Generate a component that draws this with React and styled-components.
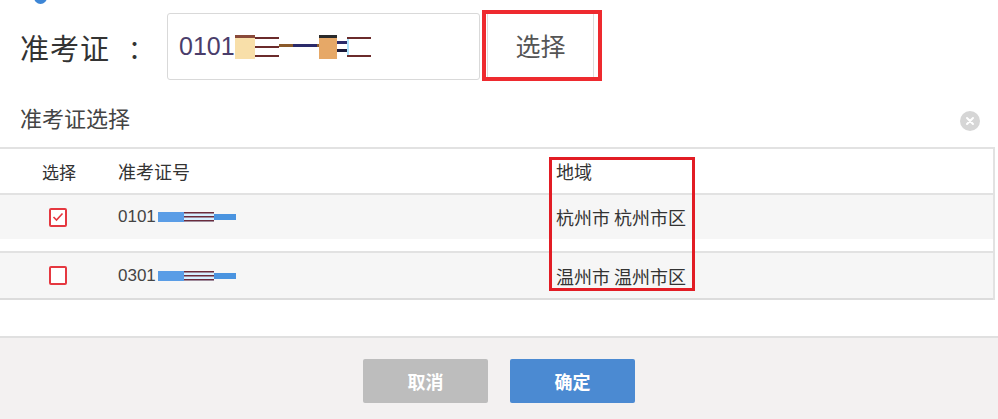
import React from 'react'
import { styled, createGlobalStyle } from 'styled-components'

const Global = createGlobalStyle`
  html, body { margin: 0; padding: 0; background: #fff; }
  body { font-family: "Noto Sans CJK SC", "Liberation Sans", sans-serif; color: #333; }
`

const Page = styled.div`
  width: 998px;
  height: 419px;
  overflow: hidden;
  position: relative;
  background: #fff;
`

const TopIcon = styled.div`
  position: absolute;
  left: 34px;
  top: -9px;
  width: 13px;
  height: 13px;
  border-radius: 50%;
  background: #3d86d6;
`

const FormRow = styled.div`
  display: flex;
  align-items: center;
  height: 92px;
  padding-left: 20px;
  box-sizing: border-box;
  padding-top: 2px;
`

const Label = styled.div`
  font-size: 29px;
  width: 147px;
  color: #333;
  letter-spacing: 1px;
  display: flex;
  align-items: center;
`

const Colon = styled.span`
  margin-left: 18px;
  font-size: 26px;
`

const Input = styled.div`
  width: 313px;
  height: 67px;
  box-sizing: border-box;
  border: 1px solid #d9d9d9;
  border-radius: 3px;
  display: flex;
  align-items: center;
  padding-left: 11px;
  font-family: "Liberation Sans", sans-serif;
  font-size: 25px;
  color: #4a3d6a;
  margin-top: -2px;
`

const RedFrame = styled.div`
  margin-left: 2px;
  border: 4px solid #ee2a2f;
  height: 71px;
  box-sizing: border-box;
  margin-top: -4px;
  display: flex;
`

const SelectBtn = styled.div`
  width: 105px;
  margin: 0 4px 0 1px;
  border-left: 1px solid #ddd;
  border-right: 1px solid #ddd;
  display: flex;
  align-items: center;
  justify-content: center;
  font-size: 25px;
  color: #555;
`

const TitleRow = styled.div`
  display: flex;
  align-items: center;
  justify-content: space-between;
  height: 55px;
  padding: 0 18px 6px 20px;
  box-sizing: border-box;
`

const Title = styled.div`
  font-size: 22px;
  color: #444;
`

const Close = styled.div`
  width: 20px;
  height: 20px;
  border-radius: 50%;
  background: #d6d6d6;
  display: flex;
  align-items: center;
  justify-content: center;
  margin-top: 8px;
`

const Table = styled.div`
  width: 995px;
  border-top: 2px solid #e2e2e2;
  border-right: 2px solid #e2e2e2;
  box-sizing: border-box;
  position: relative;
`

const Row = styled.div`
  display: grid;
  grid-template-columns: 118px 438px 1fr;
  align-items: center;
  height: ${p => p.$h || 44}px;
  background: ${p => (p.$head ? '#fff' : '#f6f6f6')};
  border-top: ${p => (p.$head ? 'none' : '2px solid #e2e2e2')};
  border-bottom: ${p => (p.$last ? '2px solid #dcdcdc' : 'none')};
  margin-top: ${p => p.$gap || 0}px;
  font-size: 17px;
  color: #333;
`

const Cell = styled.div`
  display: flex;
  align-items: center;
  justify-content: ${p => (p.$center ? 'center' : 'flex-start')};
  white-space: nowrap;
  font-size: ${p => p.$fs || 17}px;
`

const Num = styled.span`
  font-family: "Liberation Sans", sans-serif;
  font-size: 17px;
  color: #444;
  margin-right: 2px;
`

const Box = styled.div`
  width: 14px;
  height: 15px;
  border: 2px solid #e53840;
  border-radius: 2px;
  background: #fff;
  display: flex;
  align-items: center;
  justify-content: center;
  margin-left: -2px;
`

const Annot = styled.div`
  position: absolute;
  left: 549px;
  top: 8px;
  width: 146px;
  height: 134px;
  border: 3px solid #e21c24;
  box-sizing: border-box;
  pointer-events: none;
`

const Spacer = styled.div`
  height: 36px;
  border-bottom: 2px solid #e0e0e0;
`

const Footer = styled.div`
  background: #f3f1f1;
  height: 90px;
  display: flex;
  justify-content: center;
  gap: 22px;
  padding-top: 21px;
  box-sizing: border-box;
`

const Btn = styled.div`
  width: 125px;
  height: 44px;
  border-radius: 2px;
  background: ${p => (p.$primary ? '#4b8ad2' : '#bdbdbd')};
  color: #fff;
  font-size: 18px;
  font-weight: 600;
  display: flex;
  align-items: center;
  justify-content: center;
`

const InputScribble = () => (
  <svg width="140" height="30" viewBox="0 0 140 30">
    <rect x="0" y="4" width="20" height="24" fill="#f8dfa9" />
    <rect x="0" y="4" width="20" height="3" fill="#8a4a3a" />
    <rect x="20" y="6" width="24" height="2" fill="#6b2b2b" />
    <rect x="20" y="15" width="24" height="2" fill="#6b2b2b" />
    <rect x="20" y="24" width="24" height="2" fill="#6b2b2b" />
    <rect x="44" y="13" width="40" height="3" fill="#8a5a2a" />
    <rect x="58" y="13" width="24" height="3" fill="#2a2a6a" />
    <rect x="84" y="4" width="18" height="24" fill="#e6a867" />
    <rect x="84" y="4" width="18" height="3" fill="#2a2a2a" />
    <rect x="102" y="10" width="10" height="3" fill="#2a2a6a" />
    <rect x="102" y="18" width="10" height="3" fill="#1a1a3a" />
    <rect x="112" y="6" width="24" height="2" fill="#6b2b2b" />
    <rect x="112" y="24" width="24" height="2" fill="#6b2b2b" />
    <rect x="112" y="8" width="2" height="16" fill="#aee4ff" />
  </svg>
)

const RowScribble = () => (
  <svg width="80" height="14" viewBox="0 0 80 14">
    <rect x="0" y="2" width="26" height="10" fill="#5a9de6" />
    <rect x="26" y="2" width="30" height="10" fill="#d6efff" />
    <rect x="26" y="2" width="30" height="1.5" fill="#6b2b3b" />
    <rect x="26" y="6" width="30" height="1.5" fill="#6b2b3b" />
    <rect x="26" y="10" width="30" height="1.5" fill="#6b2b3b" />
    <rect x="56" y="4" width="22" height="6" fill="#4a94e0" />
  </svg>
)

const rows = [
  { id: '0101', area: '杭州市 杭州市区', checked: true },
  { id: '0301', area: '温州市 温州市区', checked: false },
]

export default function App() {
  return (
    <Page>
      <Global />
      <TopIcon />
      <FormRow>
        <Label>
          准考证<Colon>：</Colon>
        </Label>
        <Input>
          0101
          <InputScribble />
        </Input>
        <RedFrame>
          <SelectBtn>选择</SelectBtn>
        </RedFrame>
      </FormRow>

      <TitleRow>
        <Title>准考证选择</Title>
        <Close>
          <svg width="10" height="10" viewBox="0 0 10 10">
            <path d="M2 2 L8 8 M8 2 L2 8" stroke="#fff" strokeWidth="2" strokeLinecap="round" />
          </svg>
        </Close>
      </TitleRow>

      <Table>
        <Row $head>
          <Cell $center>选择</Cell>
          <Cell $fs={18}>准考证号</Cell>
          <Cell $fs={18}>地域</Cell>
        </Row>
        {rows.map((r, i) => (
          <Row key={r.id} $gap={i > 0 ? 12 : 0} $last={i === rows.length - 1} $h={i > 0 ? 45 : 44}>
            <Cell $center>
              <Box>
                {r.checked && (
                  <svg width="12" height="10" viewBox="0 0 12 10">
                    <path d="M1.5 5 L4.5 8 L10.5 1.5" stroke="#e53840" strokeWidth="1.6" fill="none" />
                  </svg>
                )}
              </Box>
            </Cell>
            <Cell>
              <Num>{r.id}</Num>
              <RowScribble />
            </Cell>
            <Cell $fs={18}>{r.area}</Cell>
          </Row>
        ))}
        <Annot />
      </Table>

      <Spacer />

      <Footer>
        <Btn>取消</Btn>
        <Btn $primary>确定</Btn>
      </Footer>
    </Page>
  )
}
